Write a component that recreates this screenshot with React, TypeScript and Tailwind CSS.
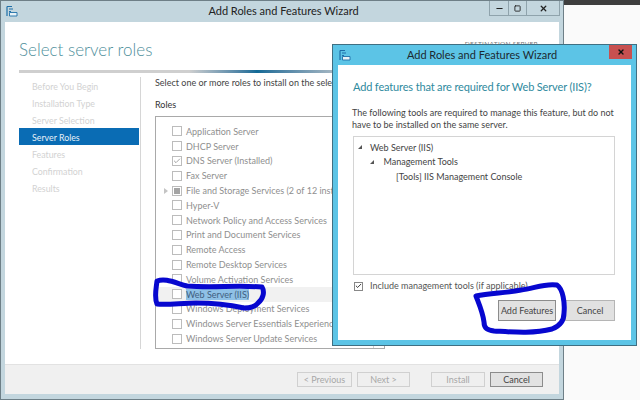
import { Check, Minus, Square, X } from "lucide-react";

const steps = ["Before You Begin", "Installation Type", "Server Selection", "Server Roles", "Features", "Confirmation", "Results"];

const roles = [
  "Application Server",
  "DHCP Server",
  "DNS Server (Installed)",
  "Fax Server",
  "File and Storage Services (2 of 12 installed)",
  "Hyper-V",
  "Network Policy and Access Services",
  "Print and Document Services",
  "Remote Access",
  "Remote Desktop Services",
  "Volume Activation Services",
  "Web Server (IIS)",
  "Windows Deployment Services",
  "Windows Server Essentials Experience",
  "Windows Server Update Services",
];

function WizardIcon({ className }: { className: string }) {
  return (
    <svg viewBox="0 0 12 11" className={className}>
      <path d="M1 0.5h5M1 0.5v9.5M3 3h4M3 5.5h2" stroke="#1f6fa8" strokeWidth="1.2" fill="none" />
      <path d="M3.5 6.5h7.5v3.5h-7.5z" fill="#e8f2f7" stroke="#1f6fa8" strokeWidth="0.9" />
    </svg>
  );
}

function RoleRow({ label }: { label: string }) {
  const web = label === "Web Server (IIS)";
  const dns = label.startsWith("DNS");
  const file = label.startsWith("File");
  return (
    <div className={`flex h-[14.8px] items-center ${web ? "bg-[#f1f1f1]" : ""}`}>
      <div className="flex w-[14px] shrink-0 justify-center pl-[2px]">
        {file && <div className="h-0 w-0 border-y-[3px] border-l-[4px] border-y-transparent border-l-[#c4c4c4]" />}
      </div>
      <div className="flex h-[10px] w-[10px] shrink-0 items-center justify-center border border-[#bcbcbc] bg-white">
        {dns && <Check size={8} strokeWidth={2} className="text-[#777]" />}
        {file && <div className="h-[6px] w-[6px] bg-[#a4a4a4]" />}
      </div>
      <span className={`ml-[4px] whitespace-nowrap text-[9px] leading-[11px] ${web ? "bg-[#8fc1e6] text-[#3f5f80]" : "text-[#8f8f8f]"}`}>
        {label}
      </span>
    </div>
  );
}

function FooterButton({ label, active, className }: { label: string; active?: boolean; className: string }) {
  return (
    <div
      className={`flex h-[15px] shrink-0 items-center justify-center border text-[9px] ${
        active ? "border-[#8c8c8c] bg-[#e2e2e2] text-[#444]" : "border-[#d0d0d0] bg-[#efefef] text-[#a8a8a8]"
      } ${className}`}
    >
      {label}
    </div>
  );
}

export default function App() {
  return (
    <div className="relative flex h-[400px] w-[640px] overflow-hidden bg-[#fafafa] font-['Lato','Liberation_Sans',sans-serif]">
      {/* main wizard window */}
      <div className="flex h-[400px] w-[564px] shrink-0 flex-col border border-[#6e7f87] bg-[#c3d6de]">
        <div className="flex h-[21px] items-start">
          <WizardIcon className="ml-[5px] mt-[5px] h-[11px] w-[12px]" />
          <div className="flex-1 pt-[2px] pl-[60px] text-center text-[11px] leading-[16px] text-[#222]">Add Roles and Features Wizard</div>
          <div className="mr-[3px] flex h-[15px] border border-t-0 border-[#8fa3ac] text-[#222]">
            <div className="flex w-[19px] items-center justify-center border-r border-[#8fa3ac]">
              <Minus size={9} strokeWidth={3} />
            </div>
            <div className="flex w-[18px] items-center justify-center border-r border-[#8fa3ac]">
              <Square size={7} strokeWidth={3} />
            </div>
            <div className="flex w-[32px] items-center justify-center">
              <X size={9} strokeWidth={3.5} />
            </div>
          </div>
        </div>
        <div className="mx-[4px] flex flex-1 flex-col bg-white">
          <div className="px-[14px] pt-[13px]">
            <div className="flex h-[30px] items-start justify-between pr-[7px]">
              <span className="text-[17px] font-light leading-[30px] text-[#4f8f9b]">Select server roles</span>
              <span className="pt-[4px] text-[6.5px] leading-[9px] tracking-[0.3px] text-[#777]">DESTINATION SERVER</span>
            </div>
            <div className="mt-[5px] h-[3px] w-[340px] bg-gradient-to-r from-[#cfcfcf] from-[50%] via-[#0f6a96] via-[70%] to-[#d0d0d0]" />
          </div>
          <div className="flex flex-1">
            <div className="ml-[14px] mt-[4px] h-[272px] w-[122px] border-r border-[#d6d6d6]">
              {steps.map((s) => (
                <div
                  key={s}
                  className={`flex h-[17px] w-[120px] items-center pl-[13px] pt-[2px] text-[8.8px] ${
                    s === "Server Roles" ? "bg-[#0a6cb4] text-[#e6f0f8]" : "text-[#d2d2d2]"
                  }`}
                >
                  {s}
                </div>
              ))}
            </div>
            <div className="ml-[14px] flex flex-col">
              <div className="mt-[3px] whitespace-nowrap text-[9px] leading-[14px] text-[#444]">Select one or more roles to install on the selected server.</div>
              <div className="mt-[8px] text-[9px] leading-[14px] text-[#333]">Roles</div>
              <div className="mt-[4px] flex h-[233px] w-[230px] border border-[#a9a9a9]">
                <div className="min-w-0 flex-1 overflow-hidden pt-[7px] pl-[2px]">
                  {roles.map((r) => (
                    <RoleRow key={r} label={r} />
                  ))}
                </div>
                <div className="w-[11px] border-l border-[#d0d0d0]" />
              </div>
            </div>
          </div>
          <div className="flex h-[30px] items-center border-t border-[#e2e2e2] bg-[#f0f0f0] pl-[292px]">
            <FooterButton label="< Previous" className="w-[55px]" />
            <FooterButton label="Next >" className="ml-[5px] w-[53px]" />
            <FooterButton label="Install" className="ml-[21px] w-[54px]" />
            <FooterButton label="Cancel" active className="ml-[5px] w-[53px]" />
          </div>
        </div>
        <div className="h-[5px]" />
      </div>
      <div className="h-[5px] flex-1 bg-[#3e3e3e]" />

      {/* dialog on top */}
      <div className="absolute left-[332px] top-[44px] flex h-[302px] w-[305px] flex-col border border-[#3f6f82] bg-[#5cc4e6]">
        <div className="flex h-[20px] items-start">
          <WizardIcon className="ml-[6px] mt-[5px] h-[11px] w-[12px]" />
          <div className="flex-1 pt-[2px] pl-[4px] text-center text-[11px] leading-[16px] text-[#1c2a30]">Add Roles and Features Wizard</div>
          <div className="mr-[4px] flex h-[14px] w-[23px] items-center justify-center bg-[#c75050] text-[#111]">
            <X size={8} strokeWidth={4} />
          </div>
        </div>
        <div className="mx-[5px] mb-[5px] flex flex-1 flex-col bg-white px-[15px]">
          <div className="mt-[12px] whitespace-nowrap text-[11px] leading-[20px] tracking-[-0.15px] text-[#2f8a9e]">Add features that are required for Web Server (IIS)?</div>
          <div className="mt-[10px] -ml-[1px] w-[262px] text-[9px] leading-[12px] text-[#444]">
            The following tools are required to manage this feature, but do not have to be installed on the same server.
          </div>
          <div className="mt-[5px] h-[139px] w-[262px] border border-[#d4d4d4] pt-[3px] text-[9px] text-[#444]">
            <div className="flex h-[14.8px] items-center pl-[4px]">
              <div className="h-0 w-0 border-b-[4px] border-l-[4px] border-b-[#555] border-l-transparent" />
              <span className="ml-[8px]">Web Server (IIS)</span>
            </div>
            <div className="flex h-[14.8px] items-center pl-[16px]">
              <div className="h-0 w-0 border-b-[4px] border-l-[4px] border-b-[#555] border-l-transparent" />
              <span className="ml-[9.5px]">Management Tools</span>
            </div>
            <div className="flex h-[14.8px] items-center pl-[42px]">[Tools] IIS Management Console</div>
          </div>
          <div className="mt-[5px] flex items-center pl-[1px]">
            <div className="flex h-[9px] w-[9px] items-center justify-center border border-[#888] bg-white">
              <Check size={8} strokeWidth={3} className="text-[#222]" />
            </div>
            <span className="ml-[7px] text-[9px] leading-[12px] text-[#555]">Include management tools (if applicable)</span>
          </div>
          <div className="mt-[8px] flex w-[262px] justify-end gap-[9px]">
            <div className="flex h-[21px] w-[58px] shrink-0 items-center justify-center whitespace-nowrap border border-[#8c8c8c] bg-[#e1e1e1] text-[9px] text-[#444]">Add Features</div>
            <div className="flex h-[21px] w-[50px] shrink-0 items-center justify-center border border-[#b5b5b5] bg-[#e1e1e1] text-[9px] text-[#444]">Cancel</div>
          </div>
        </div>
      </div>

      {/* pen marks drawn over the screenshot */}
      <svg viewBox="0 0 640 400" className="pointer-events-none absolute inset-0 h-[400px] w-[640px]" fill="none" stroke="#0707cf" strokeWidth="5" strokeLinejoin="round" strokeLinecap="round">
        <path d="M157 281c8-3 16 1 30 5 25 2 50-1 75 1 3 5 1 12-4 16-3 4-8 5-14 5-14-3-30-5-48-5-14 0-28 2-39 1-3-7-1-14 0-23z" />
        <path d="M476 296c14-3 30-3 45-6 12-1 23-7 36-5 6 4 8 18 7 28 0 8-4 13-12 16-19 5-40 3-58 2-6-1-10-2-10-9-1-9-5-18-8-26z" />
      </svg>
    </div>
  );
}
